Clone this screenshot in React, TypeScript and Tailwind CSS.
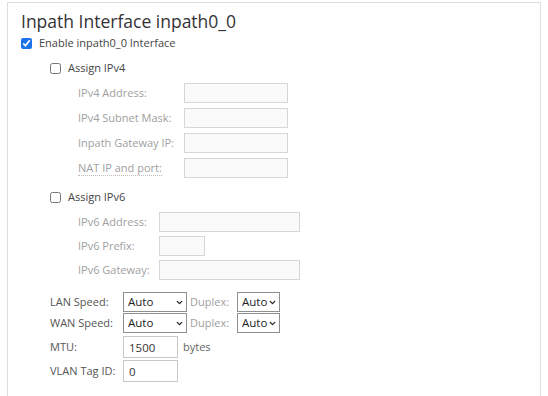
import { ChevronDown } from "lucide-react";

const font = { fontFamily: '"Open Sans", "Liberation Sans", sans-serif' };

const TextBox = ({ w, value, disabled }: { w: string; value?: string; disabled?: boolean }) => (
  <input
    type="text"
    defaultValue={value}
    disabled={disabled}
    className={`${w} h-[20px] border px-[6px] text-[11px] outline-none ${
      disabled ? "border-[#d6d6d6] bg-[#fafafa]" : "border-[#c8c8c8] bg-white text-[#333]"
    }`}
  />
);

const Select = ({ w }: { w: string }) => (
  <div className={`relative ${w} h-[20px]`}>
    <select className="h-full w-full appearance-none border border-[#8f8f8f] bg-white pl-[4px] text-[11.5px] text-[#222] outline-none">
      <option>Auto</option>
    </select>
    <ChevronDown className="pointer-events-none absolute right-[3px] top-[6px] h-[9px] w-[9px] text-[#222]" strokeWidth={3.5} />
  </div>
);

const Row = ({ label, labelW, children, dotted, muted = true }: any) => (
  <div className="flex h-[20px] items-center">
    <span className={`${labelW} shrink-0 ${muted ? "text-[#a0a0a0]" : "text-[#555]"}`}>
      <span className={dotted ? "border-b border-dotted border-[#bbb]" : ""}>{label}</span>
    </span>
    {children}
  </div>
);

const Check = ({ checked }: { checked?: boolean }) => (
  <input type="checkbox" defaultChecked={checked} className="m-0 h-[11px] w-[11px] shrink-0 accent-[#1a73e8]" />
);

export default function App() {
  return (
    <div className="h-[396px] overflow-hidden bg-white pl-[7px] pr-[7px] pt-[2px]" style={font}>
      <div className="h-[420px] border border-[#dedede] pl-[13px] pt-[4px] text-[11px]">
        <h1 className="text-[17.5px] leading-[28px] text-[#333]">Inpath Interface inpath0_0</h1>
        <label className="flex h-[16px] items-center gap-[7px] text-[#444]">
          <Check checked />
          Enable inpath0_0 Interface
        </label>

        <div className="pl-[29px]">
          <label className="mt-[9px] flex h-[16px] items-center gap-[7px] text-[#444]">
            <Check />
            Assign IPv4
          </label>
          <div className="mt-[7px] flex flex-col gap-[5px] pl-[28px]">
            <Row label="IPv4 Address:" labelW="w-[106px]"><TextBox w="w-[104px]" disabled /></Row>
            <Row label="IPv4 Subnet Mask:" labelW="w-[106px]"><TextBox w="w-[104px]" disabled /></Row>
            <Row label="Inpath Gateway IP:" labelW="w-[106px]"><TextBox w="w-[104px]" disabled /></Row>
            <Row label="NAT IP and port:" labelW="w-[106px]" dotted><TextBox w="w-[104px]" disabled /></Row>
          </div>

          <label className="mt-[11px] flex h-[16px] items-center gap-[7px] text-[#444]">
            <Check />
            Assign IPv6
          </label>
          <div className="mt-[7px] flex flex-col gap-[4px] pl-[28px]">
            <Row label="IPv6 Address:" labelW="w-[81px]"><TextBox w="w-[141px]" disabled /></Row>
            <Row label="IPv6 Prefix:" labelW="w-[81px]"><TextBox w="w-[46px]" disabled /></Row>
            <Row label="IPv6 Gateway:" labelW="w-[81px]"><TextBox w="w-[141px]" disabled /></Row>
          </div>

          <div className="mt-[12px] flex flex-col gap-[1px]">
            <Row label="LAN Speed:" labelW="w-[73px]" muted={false}>
              <Select w="w-[64px]" />
              <span className="ml-[3px] w-[47px] text-[#a0a0a0]">Duplex:</span>
              <Select w="w-[43px]" />
            </Row>
            <Row label="WAN Speed:" labelW="w-[73px]" muted={false}>
              <Select w="w-[64px]" />
              <span className="ml-[3px] w-[47px] text-[#a0a0a0]">Duplex:</span>
              <Select w="w-[43px]" />
            </Row>
            <div className="mt-[2px] flex h-[22px] items-center">
              <span className="w-[73px] text-[#555]">MTU:</span>
              <input defaultValue="1500" className="h-[22px] w-[55px] border border-[#c8c8c8] px-[5px] text-[11.5px] text-[#333] outline-none" />
              <span className="ml-[5px] text-[#666]">bytes</span>
            </div>
            <div className="mt-[1px] flex h-[22px] items-center">
              <span className="w-[73px] text-[#555]">VLAN Tag ID:</span>
              <input defaultValue="0" className="h-[22px] w-[55px] border border-[#c8c8c8] px-[5px] text-[11.5px] text-[#333] outline-none" />
            </div>
          </div>
        </div>
      </div>
    </div>
  );
}
